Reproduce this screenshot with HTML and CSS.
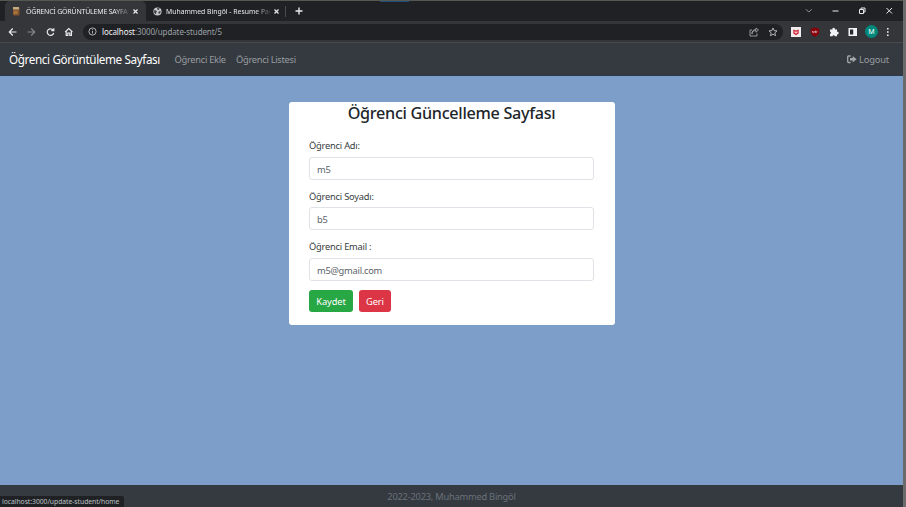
FILE: index.html
```html
<!DOCTYPE html>
<html lang="tr">
<head>
<meta charset="utf-8">
<title>Öğrenci Görüntüleme Sayfası</title>
<link rel="stylesheet" href="styles.css">
</head>
<body>
<div class="window">
  <div class="tabs">
    <div class="tab active">
      <svg class="favicon" width="8" height="10" viewBox="0 0 8 10"><rect x="1" y="1" width="6.500" height="8.500" rx="1" fill="#80552f"/><path d="M1 1h6v2.500H1z"/><path d="M1.500 5h4v3h-4z"/></svg>
      <span class="tab-title t1">ÖĞRENCİ GÖRÜNTÜLEME SAYFA</span>
      <svg class="x" width="5" height="5" viewBox="0 0 5 5"><path d="M.5.5l4 4m0-4l-4 4"/></svg>
    </div>
    <div class="tab second">
      <svg class="favicon" width="9" height="9" viewBox="0 0 9 9"><circle cx="4.500" cy="4.500" r="4.100" fill="#c4c7ca"/><path d="M1 3.300l2 .2 1 1.200-1 .8.2 1.800L1.400 6z"/><path d="M4.300 1L6.800 1.400 5.700 3 4.200 2.400zM5.400 4.700l2.300-.6-.4 1.800-1.500 1.200z"/></svg>
      <span class="tab-title t2">Muhammed Bingöl - Resume Pag</span>
      <svg class="x" width="5" height="5" viewBox="0 0 5 5"><path d="M.5.5l4 4m0-4l-4 4"/></svg>
    </div>
    <svg class="plus" width="8" height="8" viewBox="0 0 8 8"><path d="M4 .5v7M.5 4h7"/></svg>
    <svg class="controls" width="88" height="10" viewBox="0 0 88 10"><path class="dim" d="M1 3.300l2.800 2.800 2.800-2.800"/><path d="M27.500 5h6"/><path d="M54.500 3.500h4v4h-4zM56 3.500v-1.500h4v4h-1.500"/><path d="M81.500 2l5.500 5.500m0-5.500l-5.500 5.500"/></svg>
  </div>
  <div class="toolbar">
    <svg class="nav-icons" width="68" height="10" viewBox="0 0 68 10"><path d="M8.500 5H1.500M4.800 1.500L1.300 5l3.500 3.500"/><path class="off" d="M19.500 5h7M23.200 1.500L26.700 5l-3.500 3.500"/><path d="M45.200 3.200A3.300 3.300 0 1 0 45.700 6M45.800 1.300v2.300h-2.500"/><path d="M57.200 5l3.600-3.400L64.400 5M58.200 4.500v4h1.600V6h2v2.500h1.600v-4"/></svg>
    <div class="address">
      <svg width="9" height="9" viewBox="0 0 9 9"><circle cx="4.500" cy="4.500" r="3.600"/><path d="M4.500 4v2.500M4.500 2.300v.9"/></svg>
      <span class="url"><b>localhost</b>:3000/update-student/5</span>
      <svg class="share" width="10" height="10" viewBox="0 0 10 10"><path d="M3 3H1v6h7V6.500M3 7c0-3 2-3.500 4-3.500V5.200L9.400 3 7 1v1.500C4 2.500 3 4.500 3 7"/></svg>
      <svg class="star" width="10" height="10" viewBox="0 0 10 10"><path d="M5 1l1.150 2.600 2.850.3-2.150 1.900.65 2.900L5 7.200 2.500 8.700l.65-2.900L1 3.900l2.850-.3z"/></svg>
    </div>
    <div class="extensions">
      <svg width="10" height="10" viewBox="0 0 10 10"><path d="M0 0h10v10H0z" fill="#f2eeee"/><path d="M2.300 2.400L5 3.500l2.700-1.100v4L5 8.200 2.300 6.400z" fill="#ce2234"/><path d="M4 4.300v1.600h2V4.300" fill="none" stroke="#fff" stroke-width=".8"/></svg>
      <svg width="10" height="10" viewBox="0 0 10 10"><path d="M5 .4l4.200 1.300v3.600C9.200 7.500 7 9 5 9.800 3 9 .8 7.500.8 5.300V1.700z" fill="#87020b"/><path d="M2.500 4v1.300q1 .8 1.600 0V4M5.300 4h1q1.400.8 0 1.600h-1z" fill="none" stroke="#f0d9dc" stroke-width=".7"/></svg>
      <svg width="10" height="10" viewBox="0 0 10 10"><path d="M1 2.500h2.400a1.300 1.300 0 1 1 2.500 0H8v2.300a1.300 1.300 0 1 1 0 2.500v2H5.900a1.300 1.300 0 0 0-2.500 0H1V7a1.300 1.300 0 0 0 0-2.500z" fill="#f1f3f4"/></svg>
      <svg width="10" height="10" viewBox="0 0 10 10"><path d="M.5 1h8.500v8H.5z" fill="#f1f3f4"/><path d="M2 2.500h3.200v5H2z" fill="#27282b"/></svg>
      <span class="avatar">M</span>
      <svg class="dots" width="4" height="10" viewBox="0 0 4 10"><path d="M1 1h1.600v1.600H1zM1 4.200h1.600v1.600H1zM1 7.400h1.600V9H1z" fill="#e8eaed"/></svg>
    </div>
  </div>
  <nav class="navbar">
    <span class="brand">Öğrenci Görüntüleme Sayfası</span>
    <span class="link ekle">Öğrenci Ekle</span>
    <span class="link liste">Öğrenci Listesi</span>
    <span class="logout"><svg width="10" height="9" viewBox="0 0 10 9"><path d="M3.600 1H1.500Q.7 1 .7 2v4.500q0 1 .8 1h2.100" fill="none" stroke="#a4a7aa" stroke-width="1.300"/><path d="M3 3.100h2.700V1L9.600 4.300 5.700 7.600V5.500H3z" fill="#a4a7aa"/></svg><span>Logout</span></span>
  </nav>
  <main>
    <section class="card">
      <h1>Öğrenci Güncelleme Sayfası</h1>
      <form>
        <label>Öğrenci Adı:</label>
        <div class="field">m5</div>
        <label>Öğrenci Soyadı:</label>
        <div class="field">b5</div>
        <label>Öğrenci Email :</label>
        <div class="field">m5@gmail.com</div>
        <div class="buttons"><span class="btn save">Kaydet</span><span class="btn back">Geri</span></div>
      </form>
    </section>
  </main>
  <footer>2022-2023, Muhammed Bingöl</footer>
</div>
<div class="accent"></div>
<div class="status">localhost:3000/update-student/home</div>
</body>
</html>
```
FILE: styles.css
```css
* { box-sizing: border-box; }
body { margin: 0; width: 906px; height: 507px; overflow: hidden; background: #6c6c6c; font-family: "Noto Sans", sans-serif; }
svg { flex: none; }
.window { width: 903px; height: 507px; border-top: 1px solid #555752; display: flex; flex-direction: column; }
.accent { position: absolute; left: 380px; top: 1px; width: 29px; height: 1px; background: #204d76; }
.tabs { height: 20px; flex: none; background: #202124; display: flex; align-items: center; }
.tabs path { stroke: #e8eaed; stroke-width: 1; fill: none; }
.tabs .favicon path { stroke: none; }
.favicon path:nth-of-type(1) { fill: #c7aa82; }
.favicon path:nth-of-type(2) { fill: #a87539; }
.second .favicon path { fill: #35363a; }
.tab { display: flex; align-items: center; height: 20px; white-space: nowrap; color: #e8eaed; font-size: 6.8px; }
.active { width: 141px; margin-left: 5px; padding-left: 7px; background: #35363a; border-radius: 5px 5px 0 0; }
.second { width: 140px; padding-left: 7px; border-right: 1px solid #4a4b4e; height: 11px; }
.tab-title { width: 104px; margin-left: 5px; margin-right: 4px; mask-image: linear-gradient(90deg, #000 86%, rgba(0,0,0,.15)); }
.t1 { margin-left: 6px; width: 103px; font-size: 7px; letter-spacing: -.2px; }
.t2 { margin-left: 4px; letter-spacing: .02px; }
.tabs .x path { stroke-width: 1.2; }
.plus { margin-left: 9px; }
.tabs .plus path { stroke-width: 1.4; }
.controls { margin-left: auto; margin-right: 10px; }
.tabs .dim { stroke: #929396; }
.toolbar { height: 22px; flex: none; background: #35363a; display: flex; align-items: center; border-bottom: 1px solid #484b4e; }
.nav-icons { margin-left: 8px; }
.nav-icons path { fill: none; stroke: #e8eaed; stroke-width: 1.2; }
.nav-icons .off { stroke: #85878a; }
.address { width: 700px; height: 16px; margin-left: 7px; padding: 0 5px; border-radius: 8px; background: #202124; display: flex; align-items: center; }
.address svg { fill: none; stroke: #c0c3c7; stroke-width: .9; }
.url { margin-left: 5px; font-size: 8px; letter-spacing: -.1px; color: #9aa0a6; white-space: nowrap; }
.url b { font-weight: 400; color: #f1f3f4; }
.address .share { margin-left: auto; stroke: #a0a3a7; }
.star { margin-left: 9px; }
.extensions { display: flex; align-items: center; gap: 9px; margin-left: 8px; }
.avatar { width: 13px; height: 13px; margin: 0 -1px 0 -2px; border-radius: 50%; background: #00897b; color: #fff; font-size: 7px; line-height: 13px; text-align: center; }
.navbar { height: 33px; flex: none; padding: 0 14px 0 9px; background: #343a40; border-bottom: 1px solid #2e3947; display: flex; align-items: center; font-size: 9.3px; white-space: nowrap; color: #9a9da0; }
.brand { width: 152px; font-size: 11.7px; color: #fff; letter-spacing: -.37px; }
.link { letter-spacing: -.28px; }
.ekle { width: 52px; margin-left: 13.5px; }
.liste { margin-left: 9.5px; }
.logout { margin-left: auto; display: flex; align-items: center; gap: 2px; letter-spacing: -.15px; }
main { flex: 1; min-height: 0; padding-top: 25.500px; background: #7c9ec9; }
.card { width: 326.500px; height: 223.500px; margin-left: 288.500px; padding: 0 21px 0 20.500px; background: #fff; border-radius: 3px; }
h1 { height: 22px; margin: 0 0 14.500px; color: #212529; font-size: 16.2px; line-height: 22px; font-weight: 500; text-align: center; white-space: nowrap; letter-spacing: -.3px; }
label { display: block; height: 15px; line-height: 15px; margin-bottom: 3.500px; font-size: 9.3px; color: #383d41; letter-spacing: -.22px; }
.field { height: 23px; margin-bottom: 9px; padding: 0 7px; border: 1px solid #dfe2e6; border-radius: 3px; color: #5b6269; font-size: 9.3px; line-height: 23px; letter-spacing: -.25px; }
.buttons { display: flex; gap: 6px; }
.btn { height: 22px; line-height: 23px; border-radius: 3px; color: #fff; font-size: 9.3px; letter-spacing: -.1px; text-align: center; }
.save { width: 44px; background: #28a745; }
.back { width: 32px; background: #dc3545; }
footer { height: 22px; flex: none; background: #343a40; color: #6a7179; text-align: center; font-size: 9.3px; letter-spacing: -.23px; line-height: 24px; }
.status { position: absolute; left: 0; bottom: 0; width: 124px; height: 11px; padding-left: 2px; background: #202124; border-radius: 0 2px 0 0; color: #bdc1c6; font-size: 6.8px; letter-spacing: -.05px; line-height: 12px; white-space: nowrap; }
```
